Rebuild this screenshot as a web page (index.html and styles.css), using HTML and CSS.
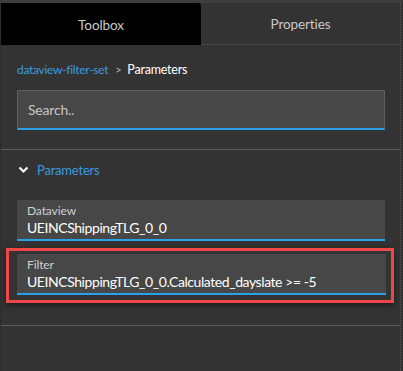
FILE: index.html
```html
<!DOCTYPE html>
<html>
<head>
<meta charset="utf-8">
<link rel="stylesheet" href="styles.css">
</head>
<body>
<div class="topstrip"></div>
<div class="panel">
  <div class="tabs">
    <div class="tab tab-active">Toolbox</div>
    <div class="tab">Properties</div>
  </div>
  <div class="content">
    <div class="breadcrumb"><span class="crumb-link">dataview-filter-set</span><span class="crumb-sep">&gt;</span><span class="crumb-current">Parameters</span></div>
    <div class="search-wrap">
      <div class="search">Search..</div>
    </div>
    <div class="divider"></div>
    <div class="section-head">
      <svg class="chev" width="11" height="8" viewBox="0 0 11 8"><path d="M1.5 1.5 L5.5 5.5 L9.5 1.5" fill="none" stroke="#ffffff" stroke-width="2.2"/></svg>
      <span class="section-title">Parameters</span>
    </div>
    <div class="field field-first">
      <div class="field-label">Dataview</div>
      <div class="field-value">UEINCShippingTLG_0_0</div>
    </div>
    <div class="highlight">
      <div class="field">
        <div class="field-label">Filter</div>
        <div class="field-value">UEINCShippingTLG_0_0.Calculated_dayslate &gt;= -5</div>
      </div>
    </div>
    <div class="divider divider-bottom"></div>
  </div>
</div>
</body>
</html>
```
FILE: styles.css
```css
html, body {
  margin: 0;
  padding: 0;
  background: #333333;
  font-family: "Source Sans Pro", "Lato", "Noto Sans", sans-serif;
  width: 403px;
  height: 371px;
  overflow: hidden;
}
.topstrip {
  height: 3px;
  background: #3e3e3e;
}
.panel {
  width: 399px;
  height: 368px;
  border-left: 1px solid #2d2d2d;
  border-right: 1px dotted #555555;
}
.tabs {
  display: flex;
  height: 42px;
}
.tab {
  flex: 1;
  display: flex;
  align-items: center;
  justify-content: center;
  color: #c9c9c9;
  font-size: 13.5px;
  letter-spacing: -0.1px;
  padding-top: 1px;
  border-bottom: 1px dotted #555555;
  box-sizing: border-box;
}
.tab-active {
  flex: 0 0 200px;
  background: #000000;
  border-bottom: none;
  border-top-right-radius: 3px;
}
.breadcrumb {
  padding: 17px 0 0 16px;
  height: 28px;
  font-size: 12px;
  letter-spacing: -0.3px;
  display: flex;
  align-items: baseline;
  box-sizing: border-box;
}
.crumb-link { color: #3a9be0; }
.crumb-sep { color: #b0b0b0; margin: 0 6px 0 7px; font-size: 11px; }
.crumb-current { color: #ffffff; font-size: 12.5px; letter-spacing: -0.2px; }
.search-wrap {
  padding: 17px 15px 0 16px;
}
.search {
  height: 40px;
  box-sizing: border-box;
  background: #474747;
  border: 1px solid #5f5f5f;
  border-bottom: 2px solid #2aa0e8;
  color: #c6c6c6;
  font-size: 14px;
  letter-spacing: -0.2px;
  padding: 0 0 0 10px;
  display: flex;
  align-items: center;
}
.divider {
  height: 1px;
  background: #5c5c5c;
  margin-top: 19px;
}
.section-head {
  display: flex;
  align-items: center;
  height: 40px;
  padding-left: 17px;
}
.chev { margin-right: 8px; }
.section-title {
  color: #3a9be0;
  font-size: 13px;
  letter-spacing: -0.2px;
}
.field {
  margin: 0 15px 0 16px;
  height: 41px;
  box-sizing: border-box;
  background: #474747;
  border-bottom: 2px solid #2aa0e8;
  padding: 3px 0 0 10px;
}
.field-first {
  margin-top: 10px;
}
.field-label {
  color: #cfcfcf;
  font-size: 12px;
  letter-spacing: -0.1px;
  line-height: 15px;
}
.field-value {
  color: #ffffff;
  font-size: 14px;
  letter-spacing: -0.43px;
  line-height: 19px;
}
.highlight {
  margin: 7px 6px 0 5px;
  border: 3px solid #f04848;
  padding: 3px 0 5px 0;
  box-shadow: 0 2px 6px rgba(0,0,0,0.5);
}
.highlight .field {
  margin: 0 5px 0 8px;
}
.divider-bottom {
  margin-top: 22px;
}
```
